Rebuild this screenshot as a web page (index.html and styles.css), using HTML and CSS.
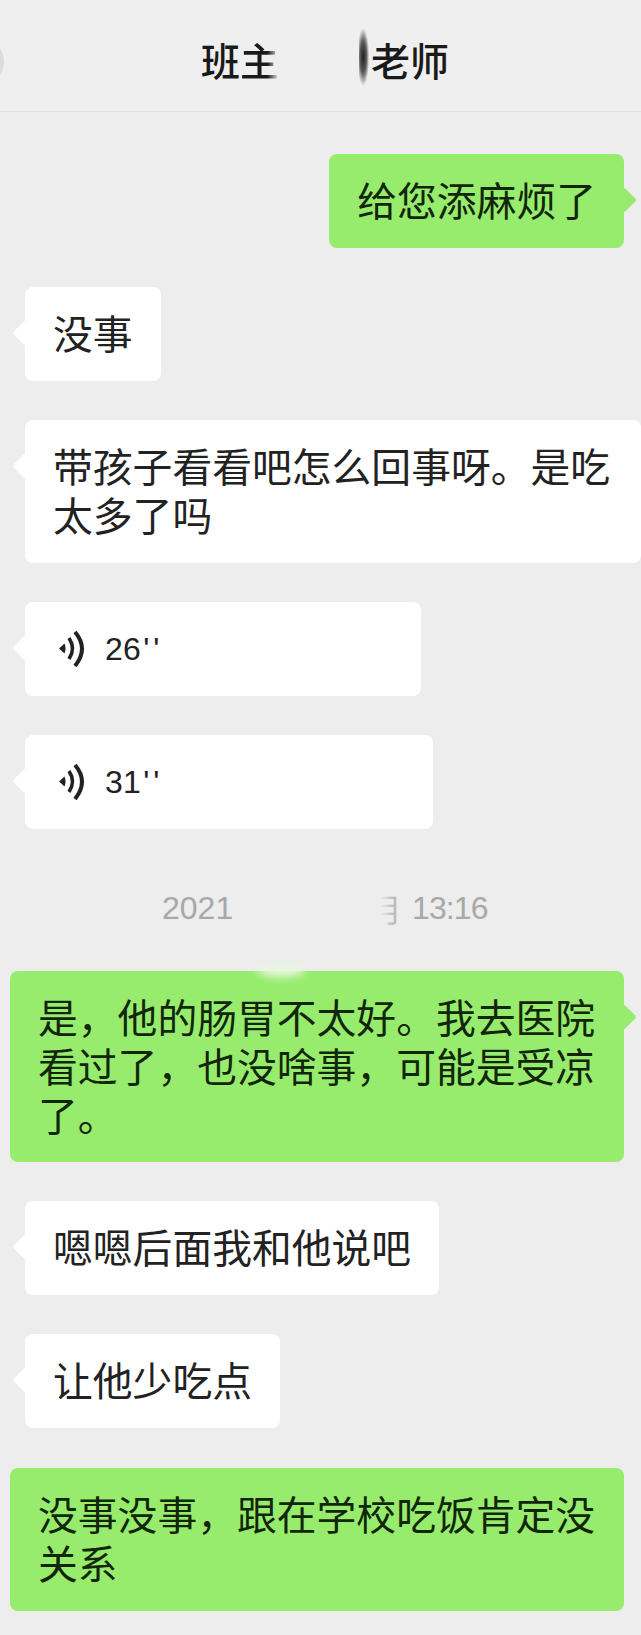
FILE: index.html
```html
<!DOCTYPE html>
<html lang="zh">
<head>
<meta charset="utf-8">
<title>班主任老师</title>
<link rel="stylesheet" href="styles.css">
</head>
<body>
<div class="screen">
  <header class="header">
    <span class="back-dot"></span>
    <span class="title-a">班<span class="fade-r">主</span></span>
    <span class="smear"></span>
    <span class="title-b">老师</span>
  </header>
  <main class="chat">
    <div class="bubble me b-short">给您添麻烦了</div>
    <div class="bubble them">没事</div>
    <div class="bubble them b-wide">带孩子看看吧怎么回事呀。是吃<br>太多了吗</div>
    <div class="bubble them voice v-26">
      <svg class="wave" viewBox="0 0 26 36"><path d="M0 17.500 5.500 12.500Q7.500 17.500 5.500 22.500Z" fill="#222"/><path d="M10 7Q17 17.500 10 28" fill="none" stroke="#222" stroke-width="3.600"/><path d="M16 1Q30 17.500 16 35" fill="none" stroke="#222" stroke-width="4"/></svg>
      <span>26<span class="quote">''</span></span>
    </div>
    <div class="bubble them voice v-31">
      <svg class="wave" viewBox="0 0 26 36"><path d="M0 17.500 5.500 12.500Q7.500 17.500 5.500 22.500Z" fill="#222"/><path d="M10 7Q17 17.500 10 28" fill="none" stroke="#222" stroke-width="3.600"/><path d="M16 1Q30 17.500 16 35" fill="none" stroke="#222" stroke-width="4"/></svg>
      <span>31<span class="quote">''</span></span>
    </div>
    <div class="time">
      <span class="time-a">2021</span>
      <span class="time-m">月</span>
      <span class="time-b">13:16</span>
    </div>
    <div class="bubble me b-full b-three">是，他的肠胃不太好。我去医院<br>看过了，也没啥事，可能是受凉<br>了。<span class="glow"></span></div>
    <div class="bubble them">嗯嗯后面我和他说吧</div>
    <div class="bubble them">让他少吃点</div>
    <div class="bubble me b-full no-tail b-last">没事没事，跟在学校吃饭肯定没<br>关系</div>
  </main>
</div>
</body>
</html>
```
FILE: styles.css
```css
* { box-sizing: border-box; }
html, body { margin: 0; padding: 0; }
body {
  width: 641px;
  height: 1635px;
  overflow: hidden;
  background: #ededed;
  font-family: "Noto Sans CJK SC", "Liberation Sans", sans-serif;
  color: #1c1c1c;
}
.screen { width: 641px; height: 1635px; overflow: hidden; }
.header {
  position: relative;
  height: 112px;
  padding-left: 201px;
  padding-top: 6px;
  display: flex;
  align-items: center;
  background: #efefef;
  border-bottom: 1px solid #e0e0e0;
  font-size: 39px;
  font-weight: 500;
  line-height: 50px;
  color: #1a1a1a;
}
.back-dot {
  position: absolute;
  left: -14px;
  top: 46px;
  width: 18px;
  height: 32px;
  border-radius: 50%;
  background: #dcdcdc;
}
.title-a { width: 158px; flex: none; }
.fade-r {
  -webkit-mask-image: linear-gradient(90deg, #000 70%, transparent 100%);
  mask-image: linear-gradient(90deg, #000 70%, transparent 100%);
}
.smear {
  flex: none;
  width: 12px;
  height: 58px;
  margin-top: -3px;
  background: radial-gradient(ellipse 6px 29px at 35% 50%, rgba(20,20,20,.95) 0%, rgba(30,30,30,.7) 55%, rgba(30,30,30,0) 100%);
}
.title-b { margin-left: 0; }
.chat {
  display: flex;
  flex-direction: column;
  align-items: flex-start;
  gap: 39px;
  padding-top: 42px;
}
.bubble {
  position: relative;
  padding: 19.5px 28px 25.5px;
  border-radius: 8px;
  background: #fff;
  font-size: 39.8px;
  line-height: 49px;
  white-space: nowrap;
  color: #222;
  margin-left: 25px;
}
.bubble::before {
  content: "";
  position: absolute;
  top: 37px;
  left: -9px;
  width: 18px;
  height: 18px;
  background: inherit;
  border-radius: 2px;
  transform: rotate(45deg);
}
.me {
  align-self: flex-end;
  margin-right: 17px;
  margin-left: 0;
  background: #97ec6d;
  color: #12260a;
}
.me::before { left: auto; right: -9px; }
.b-wide { width: 616px; }
.b-full { width: 614px; }
.b-three { height: 191px; }
.b-last { margin-top: 1px; }
.no-tail::before { display: none; }
.voice {
  height: 94px;
  display: flex;
  align-items: center;
  padding: 0 0 0 34px;
  font-family: "Liberation Sans", sans-serif;
  font-size: 32px;
  letter-spacing: .3px;
}
.v-26 { width: 396px; }
.v-31 { width: 408px; }
.wave { width: 26px; height: 36px; margin-right: 20px; flex: none; }
.quote { letter-spacing: 4px; margin-left: 2px; }
.time {
  align-self: stretch;
  margin: 21px 0 5px;
  height: 38px;
  padding-left: 162px;
  display: flex;
  align-items: center;
  font-family: "Liberation Sans", sans-serif;
  font-size: 32px;
  color: #a8a8a8;
}
.time-a { width: 208px; flex: none; }
.time-m {
  width: 42px;
  flex: none;
  font-family: "Noto Sans CJK SC", sans-serif;
  color: #bcbcbc;
  -webkit-mask-image: linear-gradient(90deg, transparent 25%, #000 55%);
  mask-image: linear-gradient(90deg, transparent 25%, #000 55%);
}
.time-b { letter-spacing: -.9px; }
.glow {
  position: absolute;
  left: 247px;
  top: -8px;
  width: 48px;
  height: 14px;
  border-radius: 50%;
  background: #e8f6df;
  filter: blur(4px);
}
```
